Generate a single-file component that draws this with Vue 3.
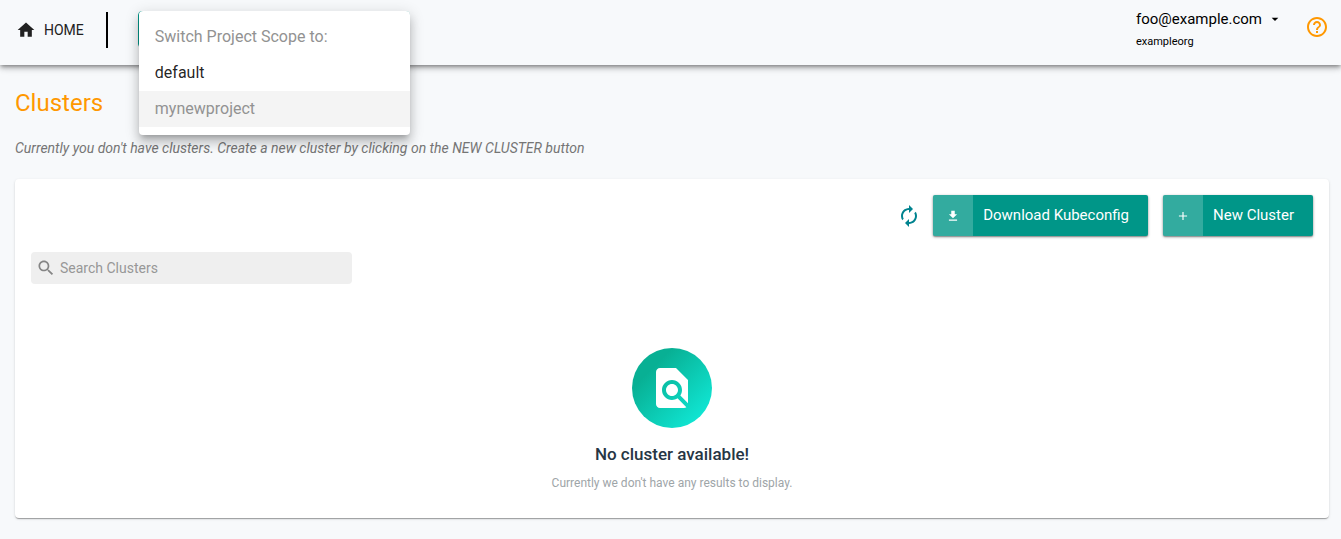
<script setup>
import { ref } from 'vue'

const search = ref('')
const projects = [
  { name: 'default', current: false },
  { name: 'mynewproject', current: true },
]
</script>

<template>
  <div class="page">
    <header class="bar">
      <a class="home" href="#">
        <svg viewBox="0 0 24 24" aria-hidden="true"><path d="M10 20v-6h4v6h5v-8h3L12 3 2 12h3v8z" /></svg>
        <span>HOME</span>
      </a>
      <div class="divider"></div>
      <div class="scope">
        <button class="scope-button" type="button" aria-label="Project scope" aria-expanded="true"></button>
        <div class="menu" role="menu">
          <div class="menu-title">Switch Project Scope to:</div>
          <button
            v-for="p in projects"
            :key="p.name"
            class="menu-item"
            :class="{ current: p.current }"
            type="button"
            role="menuitem"
          >{{ p.name }}</button>
        </div>
      </div>
      <button class="account" type="button">
        <span class="email">
          foo@example.com
          <svg viewBox="0 0 24 24" aria-hidden="true"><path d="M7 10l5 5 5-5z" /></svg>
        </span>
        <span class="org">exampleorg</span>
      </button>
      <button class="help" type="button" aria-label="Help">
        <svg viewBox="0 0 24 24" aria-hidden="true"><path d="M11 18h2v-2h-2v2zm1-16C6.48 2 2 6.48 2 12s4.480 10 10 10 10-4.480 10-10S17.520 2 12 2zm0 18c-4.410 0-8-3.590-8-8s3.590-8 8-8 8 3.590 8 8-3.590 8-8 8zm0-14c-2.210 0-4 1.790-4 4h2c0-1.100.9-2 2-2s2 .9 2 2c0 2-3 1.750-3 5h2c0-2.250 3-2.500 3-5 0-2.210-1.790-4-4-4z" /></svg>
      </button>
    </header>

    <main class="content">
      <h1>Clusters</h1>
      <p class="hint">Currently you don't have clusters. Create a new cluster by clicking on the NEW CLUSTER button</p>

      <section class="card">
        <div class="actions">
          <button class="refresh" type="button" aria-label="Refresh">
            <svg viewBox="0 0 24 24" aria-hidden="true"><path d="M12 6v3l4-4-4-4v3c-4.420 0-8 3.580-8 8 0 1.570.46 3.030 1.240 4.260L6.700 14.800c-.45-.83-.7-1.790-.7-2.800 0-3.310 2.690-6 6-6zm6.760 1.740L17.300 9.200c.44.84.7 1.790.7 2.800 0 3.310-2.690 6-6 6v-3l-4 4 4 4v-3c4.420 0 8-3.580 8-8 0-1.570-.46-3.030-1.240-4.260z" /></svg>
          </button>
          <button class="action" type="button">
            <span class="action-icon"><svg viewBox="0 0 24 24" aria-hidden="true"><path d="M19 9h-4V3H9v6H5l7 7 7-7zM5 18v2h14v-2H5z" /></svg></span>
            <span class="action-text">Download Kubeconfig</span>
          </button>
          <button class="action" type="button">
            <span class="action-icon"><svg viewBox="0 0 24 24" aria-hidden="true"><path d="M19 13h-6v6h-2v-6H5v-2h6V5h2v6h6v2z" /></svg></span>
            <span class="action-text">New Cluster</span>
          </button>
        </div>

        <label class="search">
          <svg viewBox="0 0 24 24" aria-hidden="true"><path d="M15.500 14h-.79l-.28-.27C15.410 12.590 16 11.110 16 9.500 16 5.910 13.090 3 9.500 3S3 5.910 3 9.500 5.910 16 9.500 16c1.610 0 3.090-.59 4.230-1.570l.27.28v.79l5 4.990L20.490 19l-4.990-5zm-6 0C7.010 14 5 11.990 5 9.500S7.010 5 9.500 5 14 7.010 14 9.500 11.990 14 9.500 14z" /></svg>
          <input v-model="search" type="text" placeholder="Search Clusters" aria-label="Search Clusters" />
        </label>

        <div class="empty">
          <div class="badge">
            <svg viewBox="0 0 24 24" aria-hidden="true"><path d="M20 19.590V8l-6-6H6c-1.100 0-1.990.9-1.990 2L4 20c0 1.100.89 2 1.990 2H18c.45 0 .85-.15 1.190-.4l-4.430-4.430c-.8.52-1.740.83-2.760.83-2.760 0-5-2.240-5-5s2.240-5 5-5 5 2.240 5 5c0 1.020-.31 1.960-.83 2.750L20 19.590zM9 13c0 1.660 1.340 3 3 3s3-1.340 3-3-1.340-3-3-3-3 1.340-3 3z" /></svg>
          </div>
          <h2>No cluster available!</h2>
          <p>Currently we don't have any results to display.</p>
        </div>
      </section>
    </main>
  </div>
</template>

<style>
body {
  background: #f7f9fb;
}
</style>

<style scoped>
.page {
  font-family: Roboto, "Liberation Sans", sans-serif;
  color: rgba(0, 0, 0, 0.87);
}
.page * {
  box-sizing: border-box;
}
button {
  margin: 0;
  padding: 0;
  border: 0;
  background: none;
  color: inherit;
  font: inherit;
  text-align: left;
  cursor: pointer;
}
svg {
  display: block;
  flex: none;
  fill: currentColor;
}
.bar {
  display: flex;
  align-items: flex-start;
  height: 65px;
  padding: 0 12px 0 16px;
  background: #f7f9fb;
  box-shadow: 0 2px 4px -1px rgba(0, 0, 0, 0.4), 0 4px 5px 0 rgba(0, 0, 0, 0.14), 0 1px 10px 0 rgba(0, 0, 0, 0.12);
}
.home {
  display: flex;
  align-items: center;
  gap: 8px;
  margin-top: 20px;
  color: #212121;
  font-size: 14px;
  line-height: 20px;
  text-decoration: none;
}
.home svg {
  width: 20px;
  height: 20px;
}
.divider {
  width: 2px;
  height: 36px;
  margin: 12px 30px 0 22px;
  background: #000;
}
.scope {
  position: relative;
  width: 272px;
  margin-top: 11px;
}
.scope-button {
  display: block;
  width: 100%;
  height: 37px;
  border: 1px solid #009688;
  border-radius: 4px;
}
.menu {
  position: absolute;
  z-index: 2;
  top: 0;
  left: 1px;
  right: 0;
  padding: 8px 0;
  border-radius: 4px;
  background: #fff;
  box-shadow: 0 5px 5px -3px rgba(0, 0, 0, 0.2), 0 8px 10px 1px rgba(0, 0, 0, 0.14), 0 3px 14px 2px rgba(0, 0, 0, 0.12);
  font-size: 16px;
  line-height: 24px;
}
.menu-title,
.menu-item {
  display: block;
  width: 100%;
  padding: 6px 16px;
}
.menu-title,
.menu-item.current {
  color: #929292;
}
.menu-item.current {
  background: #f4f4f4;
}
.account {
  display: flex;
  flex-direction: column;
  gap: 4px;
  margin-top: 8px;
  margin-left: auto;
  color: #000;
}
.email {
  display: flex;
  align-items: center;
  gap: 5px;
  font-size: 15px;
  line-height: 22px;
}
.email svg {
  width: 16px;
  height: 16px;
}
.org {
  font-size: 11px;
  line-height: 16px;
}
.help {
  margin: 15px 0 0 22px;
  color: #ff9800;
}
.help svg {
  width: 24px;
  height: 24px;
}
.content {
  padding: 22px 12px 20px 15px;
}
h1 {
  margin: 0;
  color: #ff9800;
  font-size: 24px;
  font-weight: 400;
  line-height: 32px;
}
.hint {
  margin: 19px 0 21px;
  color: #757575;
  font-size: 14px;
  font-style: italic;
  line-height: 20px;
}
.card {
  padding: 16px 16px 26px;
  border-radius: 4px;
  background: #fff;
  box-shadow: 0 2px 1px -1px rgba(0, 0, 0, 0.2), 0 1px 1px 0 rgba(0, 0, 0, 0.14), 0 1px 3px 0 rgba(0, 0, 0, 0.12);
}
.actions {
  display: flex;
  align-items: center;
  justify-content: flex-end;
  gap: 15px;
}
.refresh {
  margin-right: -3px;
  color: #00838f;
}
.refresh svg {
  width: 24px;
  height: 24px;
}
.action {
  display: flex;
  height: 41px;
  overflow: hidden;
  border-radius: 2px;
  background: #009688;
  box-shadow: 0 1px 3px rgba(0, 0, 0, 0.4), 0 1px 1px rgba(0, 0, 0, 0.2);
  color: #fff;
  font-size: 15px;
  line-height: 41px;
}
.action-icon {
  display: flex;
  align-items: center;
  justify-content: center;
  width: 40px;
  background: rgba(255, 255, 255, 0.2);
}
.action-icon svg {
  width: 14px;
  height: 14px;
}
.action-text {
  padding: 0 19px 0 10px;
}
.search {
  display: flex;
  align-items: center;
  gap: 4px;
  width: 25%;
  height: 32px;
  margin-top: 16px;
  padding: 0 5px;
  border-radius: 4px;
  background: #efefef;
  color: #858585;
}
.search svg {
  width: 20px;
  height: 20px;
}
.search input {
  flex: 1;
  min-width: 0;
  padding: 0;
  border: 0;
  outline: 0;
  background: none;
  color: #212121;
  font: inherit;
  font-size: 14px;
  line-height: 20px;
}
.search input::placeholder {
  color: #979797;
  opacity: 1;
}
.empty {
  display: flex;
  flex-direction: column;
  align-items: center;
  margin-top: 64px;
}
.badge {
  display: flex;
  align-items: center;
  justify-content: center;
  width: 80px;
  height: 80px;
  border-radius: 50%;
  background: linear-gradient(135deg, #08b094 25%, #11eddc 95%);
  color: #fff;
}
.badge svg {
  width: 48px;
  height: 48px;
}
h2 {
  margin: 14px 0 8px;
  color: #263645;
  font-size: 17px;
  font-weight: 500;
  line-height: 24px;
}
.empty p {
  margin: 0;
  color: #9ea5a8;
  font-size: 12px;
  line-height: 18px;
}
</style>
